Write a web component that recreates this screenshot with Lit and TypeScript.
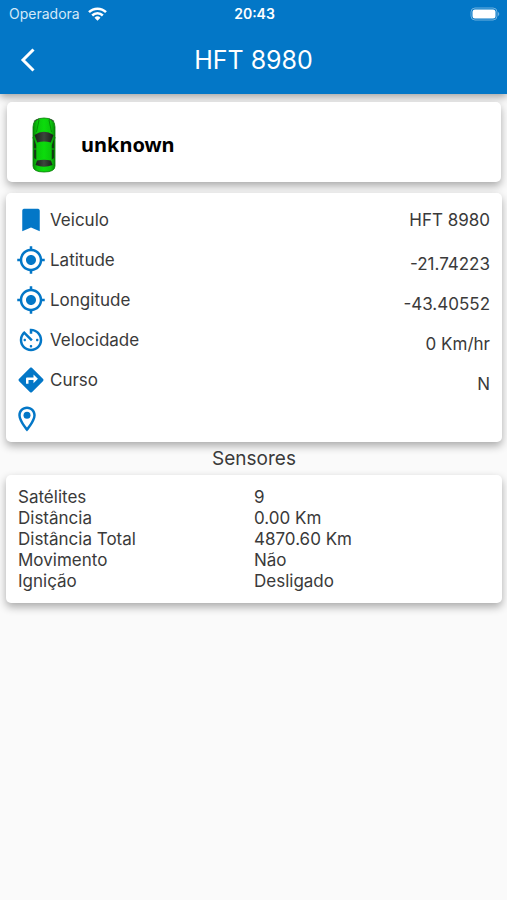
import { LitElement, html, css, svg } from "lit";
import { customElement, property } from "lit/decorators.js";

const icons = {
  bookmark: svg`<path d="M17 3H7c-1.1 0-1.99.4-1.99 1.5L5 21l7-3 7 3V4.500c0-1.1-.9-1.500-2-1.500z"/>`,
  target: svg`<path d="M12 8c-2.210 0-4 1.790-4 4s1.790 4 4 4 4-1.790 4-4-1.790-4-4-4zm8.940 3c-.46-4.170-3.770-7.480-7.940-7.940V1h-2v2.060C6.830 3.520 3.520 6.830 3.060 11H1v2h2.060c.46 4.170 3.770 7.480 7.940 7.940V23h2v-2.060c4.170-.46 7.480-3.770 7.940-7.940H23v-2h-2.060zM12 19c-3.870 0-7-3.130-7-7s3.130-7 7-7 7 3.130 7 7-3.130 7-7 7z"/>`,
  timer: svg`<path d="M11 17c0 .55.45 1 1 1s1-.45 1-1-.45-1-1-1-1 .45-1 1zm0-14v4h2V5.080c3.390.49 6 3.390 6 6.920 0 3.870-3.130 7-7 7s-7-3.130-7-7c0-1.680.59-3.220 1.580-4.420L12 13l1.410-1.410-6.800-6.800v.02C4.420 6.450 3 9.050 3 12c0 4.970 4.020 9 9 9 4.970 0 9-4.030 9-9s-4.030-9-9-9h-1zm7 9c0-.55-.45-1-1-1s-1 .45-1 1 .45 1 1 1 1-.45 1-1zM6 12c0 .55.45 1 1 1s1-.45 1-1-.45-1-1-1-1 .45-1 1z"/>`,
  directions: svg`<path d="M21.710 11.290l-9-9c-.39-.39-1.020-.39-1.410 0l-9 9c-.39.39-.39 1.020 0 1.410l9 9c.39.39 1.020.39 1.410 0l9-9c.39-.38.39-1.010 0-1.410zM14 14.500V12h-4v3H8v-4c0-.55.45-1 1-1h5V7.500l3.500 3.500-3.500 3.500z"/>`,
  place: svg`<path d="M12 2C8.130 2 5 5.130 5 9c0 5.250 7 13 7 13s7-7.750 7-13c0-3.870-3.130-7-7-7zM7 9c0-2.760 2.240-5 5-5s5 2.240 5 5c0 2.880-2.880 7.190-5 9.880C9.920 16.210 7 11.850 7 9z"/><circle cx="12" cy="9" r="2.8"/>`,
};

type IconName = keyof typeof icons;

@customElement("app-icon")
class AppIcon extends LitElement {
  @property() name: IconName = "place";

  static styles = css`
    :host {
      display: block;
      flex: none;
      width: 30px;
      height: 30px;
    }
    .glyph {
      display: block;
      width: 100%;
      height: 100%;
      fill: #0377c7;
    }
  `;

  render() {
    return html`<svg class="glyph" viewBox="0 0 24 24" aria-hidden="true">${icons[this.name]}</svg>`;
  }
}

@customElement("status-bar")
class StatusBar extends LitElement {
  static styles = css`
    :host {
      display: grid;
      grid-template-columns: 1fr auto 1fr;
      align-items: center;
      height: 27px;
      padding: 0 7px 0 9px;
      font-size: 14px;
      line-height: 16px;
    }
    .carrier {
      display: flex;
      align-items: center;
      gap: 8px;
      color: #d3e9f8;
    }
    .time {
      font-weight: 600;
    }
    .battery {
      justify-self: end;
      display: block;
    }
    .wifi {
      display: block;
    }
  `;

  render() {
    return html`
      <div class="carrier">
        <span>Operadora</span>
        <svg class="wifi" width="19" height="14" viewBox="0 0 19 14" aria-hidden="true">
          <g fill="none" stroke="#fff" stroke-width="2.500">
            <path d="M1 5.200a12 12 0 0 1 17 0" />
            <path d="M4.200 8.500a7.500 7.500 0 0 1 10.600 0" />
          </g>
          <path d="M6.500 10.800a4.300 4.300 0 0 1 6 0l-3 3z" fill="#fff" />
        </svg>
      </div>
      <span class="time">20:43</span>
      <svg class="battery" width="30" height="14" viewBox="0 0 30 14" aria-hidden="true">
        <rect x="1" y="1" width="26" height="12" rx="4" fill="none" stroke="#6db1df" stroke-width="1" />
        <rect x="2.500" y="2.500" width="23" height="9" rx="2.500" fill="#fff" />
        <path d="M28 5a2.200 2.200 0 0 1 0 4z" fill="#6db1df" />
      </svg>
    `;
  }
}

interface Detail {
  icon: IconName;
  label: string;
  value: string;
}

@customElement("app-root")
class AppRoot extends LitElement {
  private details: Detail[] = [
    { icon: "bookmark", label: "Veiculo", value: "HFT 8980" },
    { icon: "target", label: "Latitude", value: "-21.74223" },
    { icon: "target", label: "Longitude", value: "-43.40552" },
    { icon: "timer", label: "Velocidade", value: "0 Km/hr" },
    { icon: "directions", label: "Curso", value: "N" },
  ];

  private sensors: [string, string][] = [
    ["Satélites", "9"],
    ["Distância", "0.00 Km"],
    ["Distância Total", "4870.60 Km"],
    ["Movimento", "Não"],
    ["Ignição", "Desligado"],
  ];

  static styles = css`
    :host {
      display: block;
      box-sizing: border-box;
      min-height: 100vh;
      background: #fafafa;
      color: #3a3a3a;
      font-family: Inter, "Liberation Sans", sans-serif;
      font-size: 17px;
      line-height: 21px;
    }
    .header {
      padding-bottom: 2px;
      background: #0377c7;
      color: #fff;
      box-shadow: 0 3px 8px rgba(0, 0, 0, 0.36);
    }
    .nav {
      display: grid;
      grid-template-columns: 56px 1fr 56px;
      align-items: center;
      height: 65px;
    }
    .back {
      display: grid;
      place-items: center;
      height: 48px;
      padding: 0;
      border: 0;
      background: none;
      color: inherit;
    }
    .title {
      margin: 0;
      text-align: center;
      font-size: 25px;
      font-weight: 400;
      line-height: 32px;
    }
    .content {
      padding: 8px 5px 16px 6px;
    }
    .card {
      border-radius: 5px;
      background: #fff;
      box-shadow: 0 4px 8px rgba(0, 0, 0, 0.32);
    }
    .vehicle {
      display: flex;
      align-items: center;
      gap: 24px;
      box-sizing: border-box;
      height: 80px;
      margin: 0 1px;
      padding: 6px 24px 0;
    }
    .car {
      display: block;
      flex: none;
    }
    .status {
      margin: 0;
      color: #000;
      font: bold 20px/28px "Noto Sans", sans-serif;
    }
    .details {
      margin-top: 11px;
      padding: 7px 12px 8px 10px;
    }
    .list {
      margin: 0;
    }
    .row {
      display: flex;
      justify-content: space-between;
      align-items: center;
      height: 40px;
    }
    .label {
      display: flex;
      align-items: center;
      gap: 4px;
    }
    .value {
      margin: 0;
    }
    .row + .row .value {
      padding-top: 8px;
    }
    .address {
      display: flex;
      margin: 4px 0 0 -4px;
    }
    .heading {
      margin: 0;
      padding: 5px 0 4px;
      text-align: center;
      font-size: 19px;
      font-weight: 400;
      line-height: 24px;
    }
    .sensors {
      padding: 12px 12px 11px;
    }
    .table {
      width: 100%;
      table-layout: fixed;
      border-collapse: collapse;
    }
    .table th,
    .table td {
      padding: 0;
      text-align: left;
      font-weight: 400;
    }
  `;

  render() {
    return html`
      <header class="header">
        <status-bar></status-bar>
        <div class="nav">
          <button class="back" type="button" aria-label="Voltar">
            <svg width="16" height="26" viewBox="0 0 16 26" aria-hidden="true">
              <path d="M13.500 2.500L3 13l10.500 10.500" fill="none" stroke="#fff" stroke-width="3" />
            </svg>
          </button>
          <h1 class="title">HFT 8980</h1>
        </div>
      </header>
      <main class="content">
        <section class="card vehicle">
          <svg class="car" width="26" height="56" viewBox="0 0 26 56" aria-hidden="true">
            <defs>
              <linearGradient id="body">
                <stop offset="0" stop-color="#078a07" />
                <stop offset="0.2" stop-color="#0bc80b" />
                <stop offset="0.5" stop-color="#0cdc0c" />
                <stop offset="0.8" stop-color="#0bc80b" />
                <stop offset="1" stop-color="#078a07" />
              </linearGradient>
              <linearGradient id="glass">
                <stop offset="0" stop-color="#182018" />
                <stop offset="0.5" stop-color="#3c463c" />
                <stop offset="1" stop-color="#182018" />
              </linearGradient>
            </defs>
            <path d="M1 21l3-2v3zM25 21l-3-2v3z" fill="#087008" />
            <path d="M2 10Q2 1 13 1T24 10V49Q24 55 13 55T2 49z" fill="url(#body)" stroke="#087a08" stroke-width="0.8" />
            <path d="M8 3L5.500 15M18 3l2.500 12" fill="none" stroke="#078f07" stroke-width="1" />
            <path d="M3 4.500Q5 2.500 8 2M23 4.500Q21 2.500 18 2" fill="none" stroke="#315f31" stroke-width="1.200" />
            <path d="M3.500 18Q13 11.500 22.500 18L19.800 25.500Q13 23.500 6.200 25.500z" fill="url(#glass)" />
            <path d="M3 22l2.200 6v14.500L3 41zM23 22l-2.200 6v14.500L23 41z" fill="#123c12" />
            <path d="M2.800 32h3M20.200 32h3" stroke="#0bc00b" stroke-width="1" />
            <path d="M6 43.500Q13 42 20 43.500L21.500 48Q13 51.500 4.500 48z" fill="url(#glass)" />
          </svg>
          <p class="status">unknown</p>
        </section>
        <section class="card details">
          <dl class="list">
            ${this.details.map(
              (d) => html`
                <div class="row">
                  <dt class="label"><app-icon name=${d.icon}></app-icon>${d.label}</dt>
                  <dd class="value">${d.value}</dd>
                </div>
              `,
            )}
          </dl>
          <div class="address"><app-icon name="place"></app-icon></div>
        </section>
        <h2 class="heading" id="sensors-heading">Sensores</h2>
        <section class="card sensors">
          <table class="table" aria-labelledby="sensors-heading">
            <tbody>
              ${this.sensors.map(
                ([name, value]) => html`<tr><th scope="row">${name}</th><td>${value}</td></tr>`,
              )}
            </tbody>
          </table>
        </section>
      </main>
    `;
  }
}
